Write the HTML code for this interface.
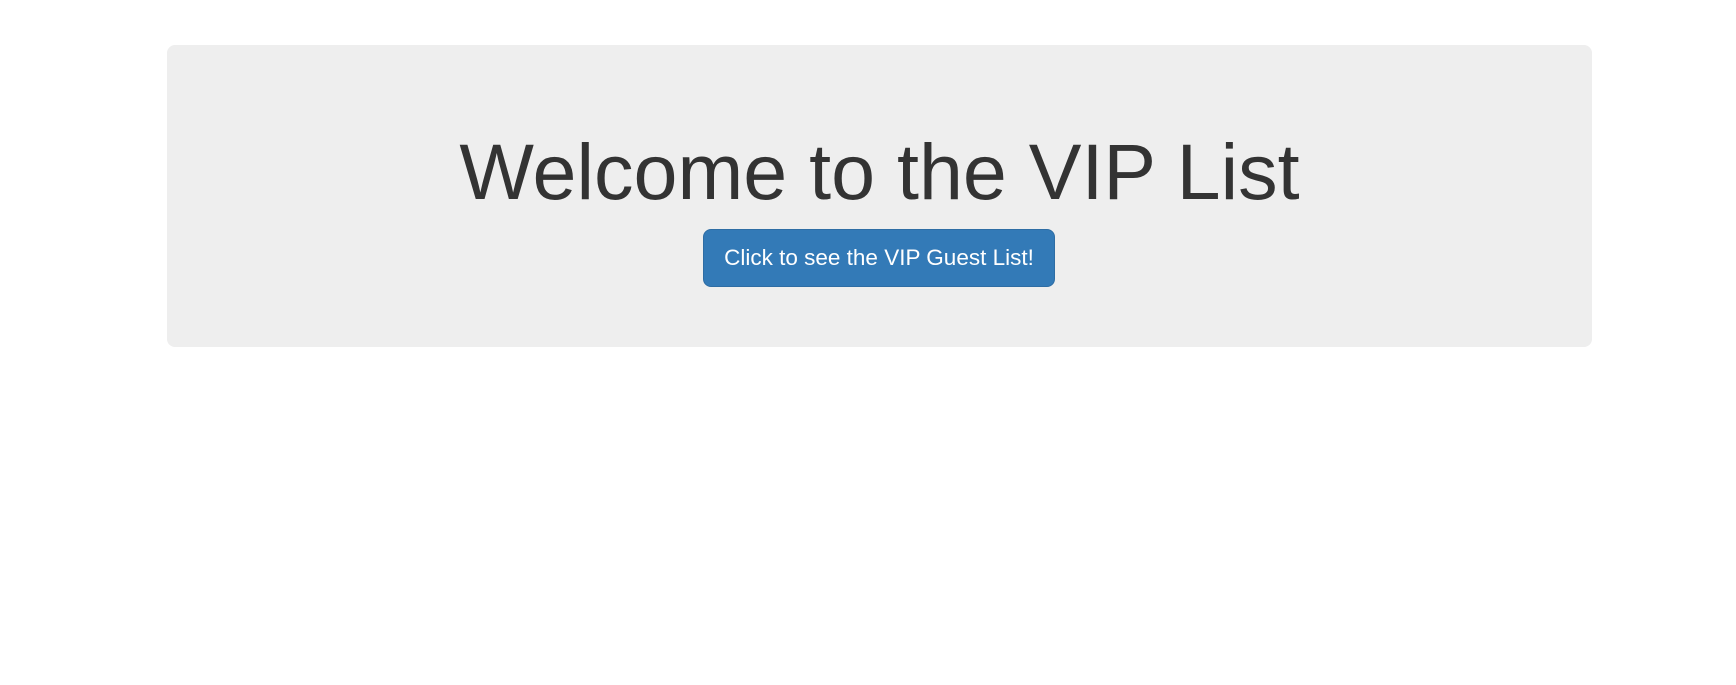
<!DOCTYPE html>
<html><head><style>
body{margin:0;background:#fff;width:1736px;height:685px;overflow:hidden;font-family:"Liberation Sans",Arial,sans-serif;}
.j{position:absolute;left:167px;top:45px;width:1425px;height:302px;background:#eee;border-radius:8px;}
h1{position:absolute;left:167px;width:1425px;top:132px;margin:0;text-align:center;font-weight:400;font-size:79px;line-height:79px;color:#333;white-space:nowrap;}
.b{position:absolute;left:703px;top:229px;width:352px;height:58px;box-sizing:border-box;background:#337ab7;border:1px solid #2e6da4;border-radius:8px;color:#fff;font-size:22.5px;text-align:center;line-height:56px;}
</style></head><body>
<div class="j"></div>
<h1>Welcome to the VIP List</h1>
<div class="b">Click to see the VIP Guest List!</div>
</body></html>
